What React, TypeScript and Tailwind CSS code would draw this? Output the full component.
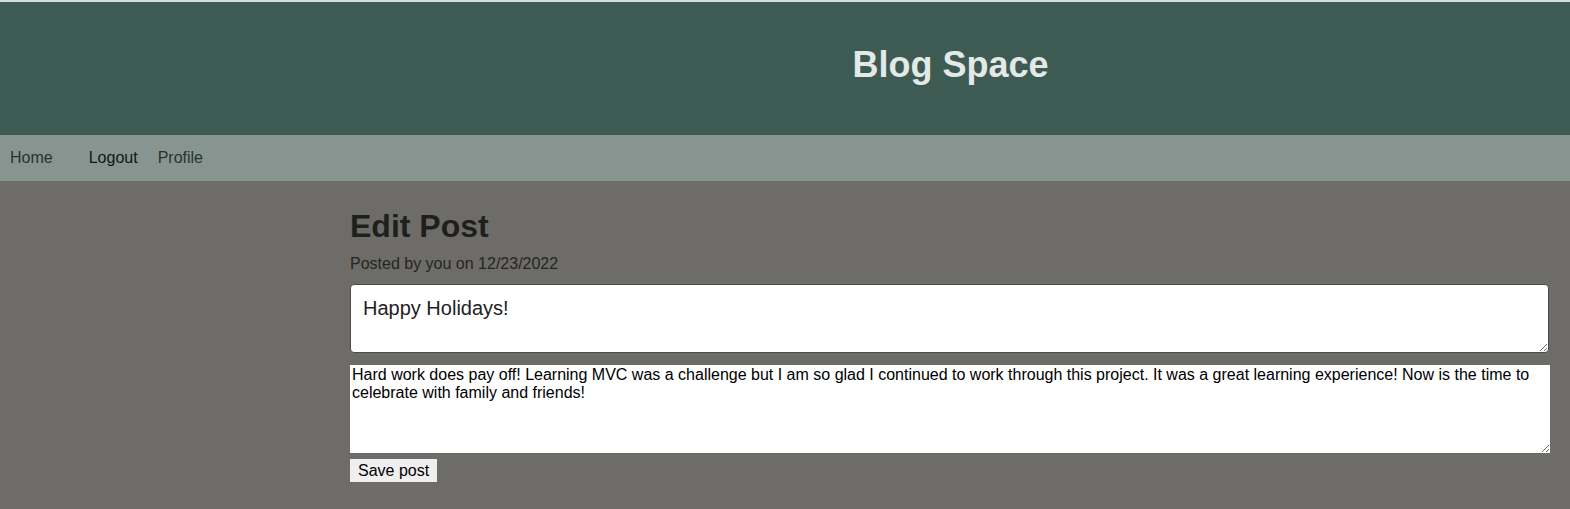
const NavLink = ({ label, className }: { label: string; className: string }) => (
  <a href="#" className={`text-[16px] leading-[46px] ${className}`}>
    {label}
  </a>
);

export default function App() {
  return (
    <div className="min-h-[509px] bg-[#6d6c68] font-['Liberation_Sans',Arial,sans-serif] border-t-2 border-[#d8dcdb]">
      <header className="h-[133px] bg-[#3d5a53] flex items-start">
        <div className="ml-[331px] flex-1 text-center pt-[39px]">
          <h1 className="text-[36px] font-bold leading-[48px] text-[#e3e9e7]">Blog Space</h1>
        </div>
      </header>
      <nav className="h-[46px] bg-[#879590] flex items-center pl-[10px]">
        <NavLink label="Home" className="text-[#27332f] mr-[36px]" />
        <NavLink label="Logout" className="text-[#111615] mr-[20px]" />
        <NavLink label="Profile" className="text-[#27332f]" />
      </nav>
      <main className="pl-[350px] pr-[20px] pt-[25px] pb-[28px]">
        <h2 className="text-[32px] font-bold leading-[40px] text-[#1f1f1e]">Edit Post</h2>
        <p className="text-[16px] leading-[20px] text-[#252524] mt-[8px]">Posted by you on 12/23/2022</p>
        <textarea
          className="block mt-[10px] w-[1199px] h-[69px] bg-white border border-[#4a4a4a] rounded-[4px] px-[12px] py-[11px] text-[20px] leading-[24px] text-[#222] resize-y"
          defaultValue="Happy Holidays!"
        />
        <textarea
          className="block mt-[12px] w-[1200px] h-[88px] bg-white border-0 px-[2px] py-[1px] text-[16px] leading-[18px] text-black resize-y"
          defaultValue="Hard work does pay off! Learning MVC was a challenge but I am so glad I continued to work through this project. It was a great learning experience! Now is the time to celebrate with family and friends!"
        />
        <button className="mt-[6px] h-[23px] px-[8px] bg-[#efefef] text-[16px] leading-[20px] text-black">
          Save post
        </button>
      </main>
    </div>
  );
}
